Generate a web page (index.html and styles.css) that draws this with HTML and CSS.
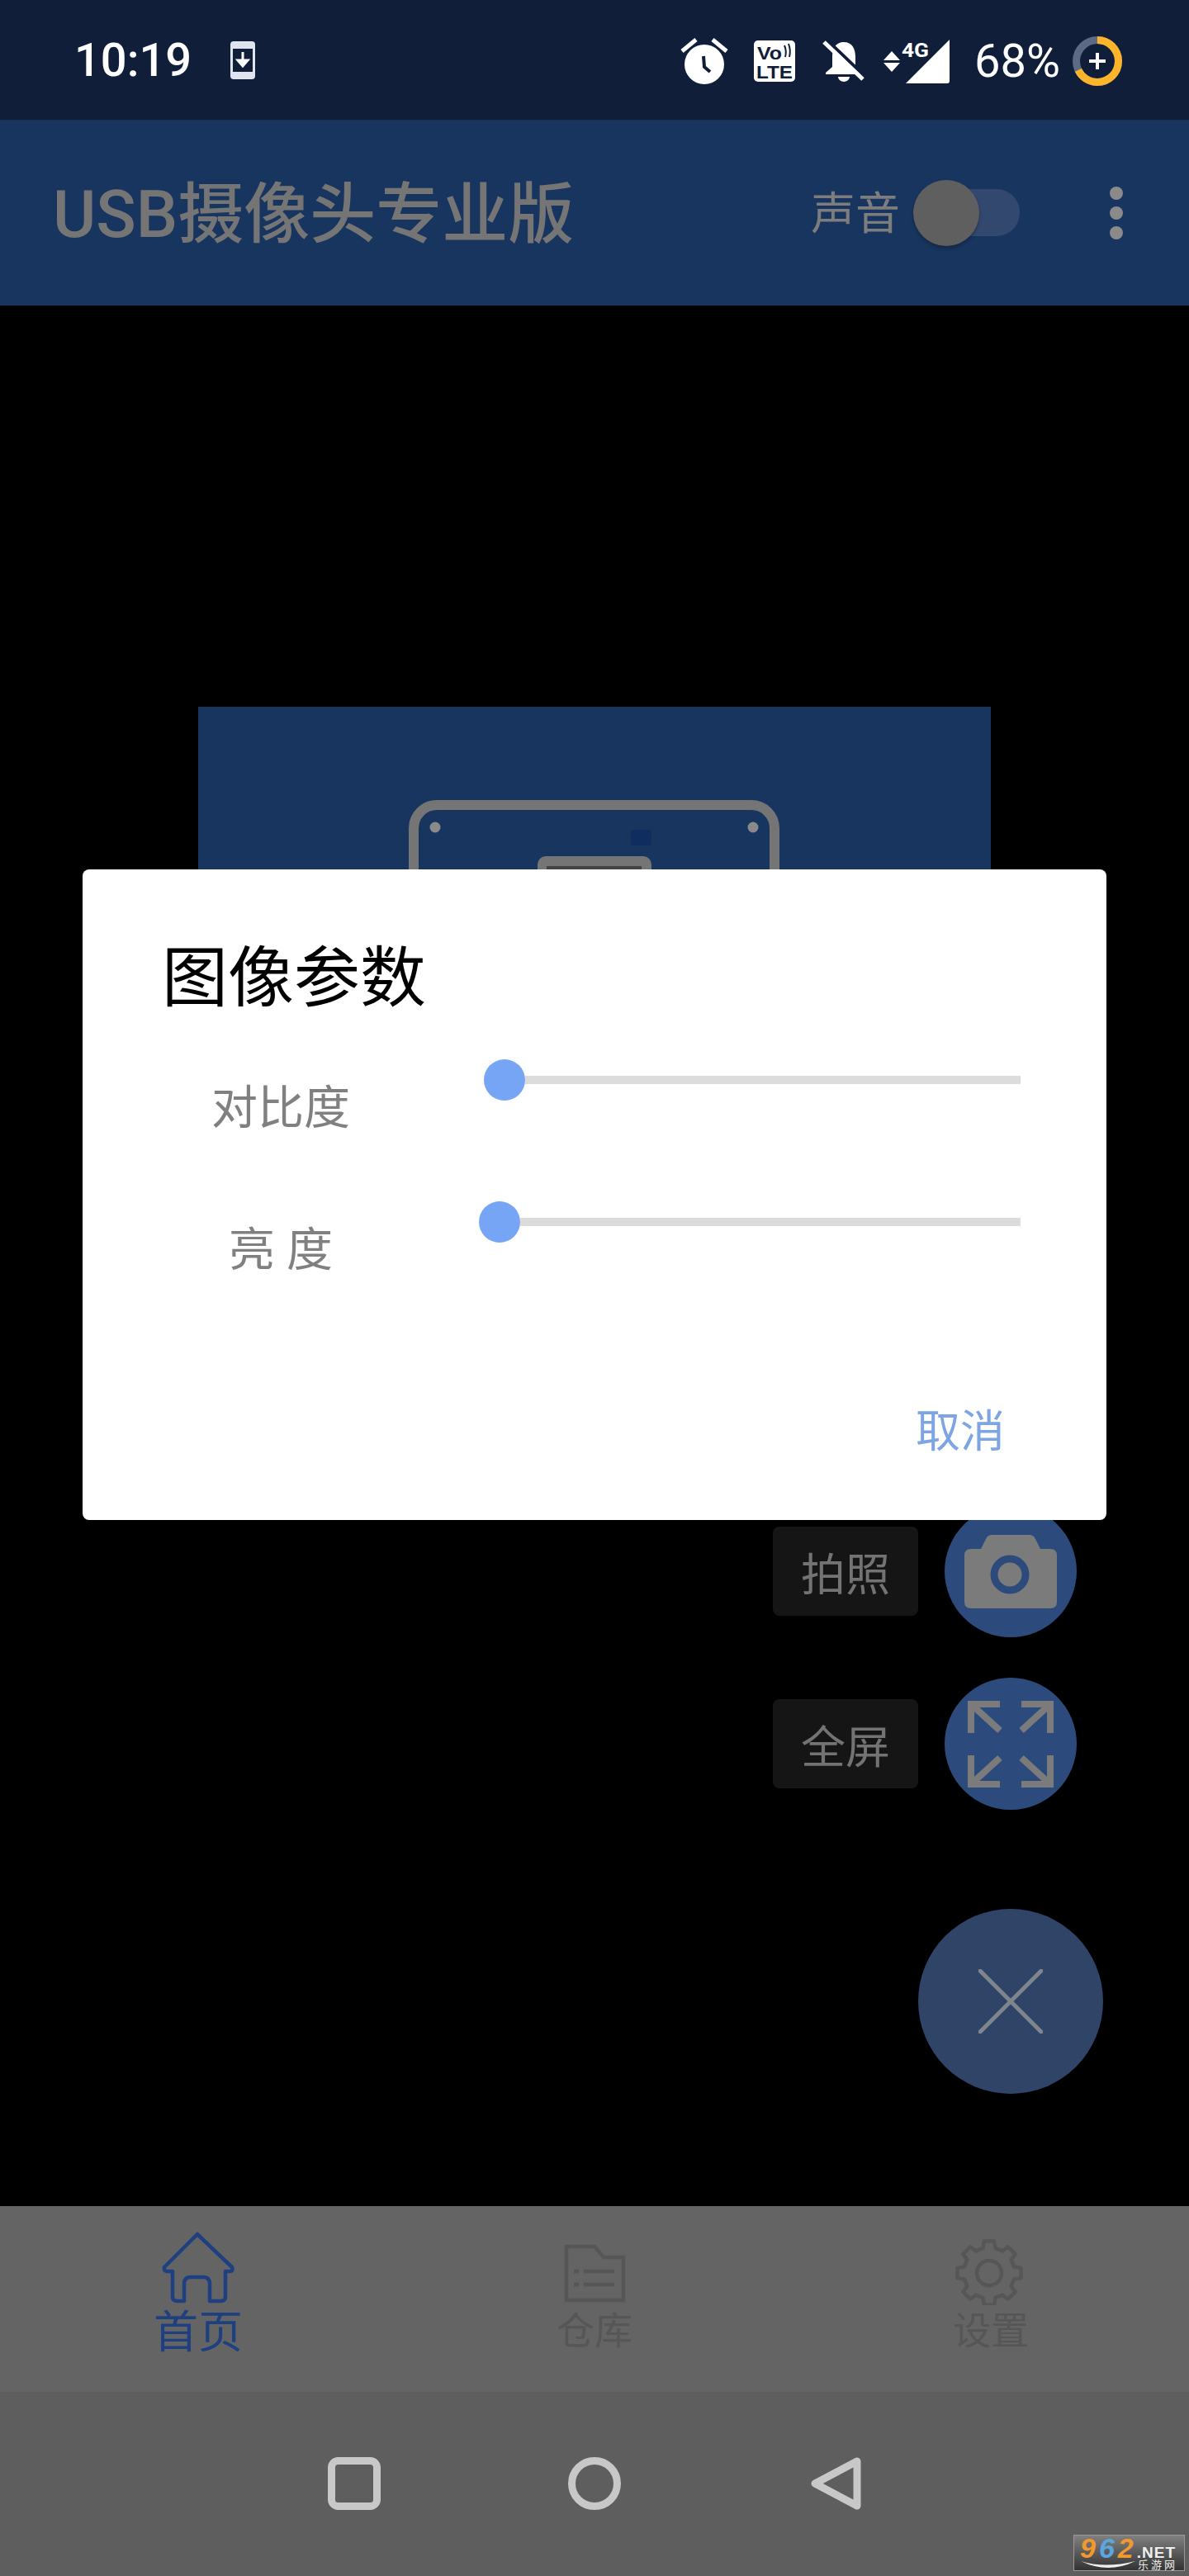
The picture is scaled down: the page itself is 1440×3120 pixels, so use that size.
FILE: index.html
```html
<!DOCTYPE html>
<html lang="zh">
<head>
<meta charset="utf-8">
<title>USB摄像头专业版</title>
<link rel="stylesheet" href="styles.css">
</head>
<body>
<div class="screen">
  <header class="status">
    <div class="status-left">
      <span class="time">10:19</span>
      <svg class="ico-dl" width="30" height="46" viewBox="0 0 30 46"><rect width="30" height="46" rx="4" fill="#dfe4ee"/><rect x="3" y="9" width="24" height="28" fill="#101e3a"/><path d="M15 13V28M9 23L15 30L21 23Z" stroke="#fff" stroke-width="3" fill="#fff"/></svg>
    </div>
    <div class="status-right">
      <svg width="58" height="56" viewBox="0 0 58 56"><circle cx="29" cy="32" r="24" fill="#fff"/><path d="M2 16L19 2M39 2L56 16" stroke="#fff" stroke-width="5"/><path d="M28 22L29 35L36 41" stroke="#101e3a" stroke-width="4" fill="none"/></svg>
      <svg class="g31" width="50" height="50" viewBox="0 0 50 50"><rect width="50" height="50" rx="5" fill="#fff"/><text x="4" y="23" class="vo" textLength="30" lengthAdjust="spacingAndGlyphs">Vo</text><path d="M37 6Q40 13 38 20M42 4Q45 12 43 20" stroke="#101e3a" stroke-width="2" fill="none"/><text x="3" y="46" class="lte" textLength="44" lengthAdjust="spacingAndGlyphs">LTE</text></svg>
      <svg class="g33" width="50" height="50" viewBox="0 0 50 50"><path d="M26 2C36 2 40 10 40 20V32L48 40V41H4V39L12 32V20C12 10 16 2 26 2Z" fill="#fff"/><path d="M19 44A7 6 0 0 0 33 44Z" fill="#fff"/><path d="M6 0L50 42" stroke="#101e3a" stroke-width="4"/><path d="M2 2L49 47" stroke="#fff" stroke-width="5"/></svg>
      <svg class="g24" width="80" height="54" viewBox="0 0 80 54"><path d="M80 1V51Q80 54 77 54H27Z" fill="#fff"/><path d="M10 15L20 26H0ZM10 40L0 29H20Z" fill="#fff"/><text x="22" y="22" class="fourg" textLength="33" lengthAdjust="spacingAndGlyphs">4G</text></svg>
      <span class="batt">68%</span>
      <svg class="ring" width="60" height="60" viewBox="0 0 60 60"><circle cx="30" cy="30" r="25.5" fill="none" stroke="#5c6a85" stroke-width="9"/><circle cx="30" cy="30" r="25.5" fill="none" stroke="#fdb32a" stroke-width="9" pathLength="100" stroke-dasharray="68 32" transform="rotate(-90 30 30)"/><path d="M30 20V40M20 30H40" stroke="#fff" stroke-width="4"/></svg>
    </div>
  </header>

  <div class="appbar">
    <h1 class="app-title">USB摄像头专业版</h1>
    <div class="app-actions">
      <span class="sound">声音</span>
      <div class="track"><span class="thumb"></span></div>
      <div class="dots"><i></i><i></i><i></i></div>
    </div>
  </div>

  <main class="main">
    <svg class="preview" width="960" height="720" viewBox="0 0 960 720">
      <rect width="960" height="720" fill="#18355f"/>
      <rect x="261" y="119" width="437" height="560" rx="28" fill="none" stroke="#757575" stroke-width="12"/>
      <circle cx="287" cy="146" r="6.5" fill="#8a8a8a"/>
      <circle cx="672" cy="146" r="6.5" fill="#8a8a8a"/>
      <rect x="524" y="149" width="25" height="19" rx="3" fill="#0f2d5f"/>
      <rect x="411" y="181" width="138" height="200" rx="10" fill="#757575"/>
      <rect x="422" y="193" width="115" height="100" fill="#444"/>
    </svg>

    <div class="fabs">
      <div class="fab-row">
        <span class="fab-label">拍照</span>
        <span class="fab">
          <svg width="112" height="89" viewBox="0 0 112 89"><path d="M8 17H20L26 5Q28 0 34 0H78Q84 0 86 5L92 17H104Q112 17 112 25V81Q112 89 104 89H8Q0 89 0 81V25Q0 17 8 17Z" fill="#7b7b7b"/><circle cx="55" cy="48" r="19" fill="none" stroke="#2d4a7c" stroke-width="9"/></svg>
        </span>
      </div>
      <div class="fab-row">
        <span class="fab-label">全屏</span>
        <span class="fab">
          <svg width="104" height="105" viewBox="0 0 104 105"><g fill="none" stroke="#7b7b7b" stroke-width="8"><path d="M4 39V4H39M4 4L39 36"/><path d="M65 4H100V39M100 4L65 36"/><path d="M4 66V101H39M4 101L39 69"/><path d="M65 101H100V66M100 101L65 69"/></g></svg>
        </span>
      </div>
      <button class="fab-main" type="button">
        <svg width="78" height="78" viewBox="0 0 78 78"><path d="M2 2L76 76M76 2L2 76" stroke="#7e868c" stroke-width="5" stroke-linecap="round"/></svg>
      </button>
    </div>
  </main>

  <nav class="tabs">
    <div class="tab tab-on">
      <svg width="90" height="90" viewBox="0 0 90 90"><path d="M44 4L4 44Q3 49 8 49H14V80Q14 85 20 85H28V64Q28 56 36 56H51Q59 56 59 64V85H72Q78 85 78 80V49H83Q88 49 86 44Z" fill="none" stroke="#1e3f80" stroke-width="4.5" stroke-linejoin="round"/></svg>
      <span>首页</span>
    </div>
    <div class="tab">
      <svg width="90" height="90" viewBox="0 0 90 90"><g fill="none" stroke="#565656" stroke-width="4.5"><path d="M11 19H45L56 32H80V84H11Z"/><path d="M20 49H26M32 49H69M20 65H26M32 65H69"/></g></svg>
      <span>仓库</span>
    </div>
    <div class="tab">
      <svg width="90" height="90" viewBox="0 0 90 90"><g transform="translate(43 51)" fill="none" stroke="#565656" stroke-width="4.5" stroke-linejoin="round"><polygon points="30.1,-7.5 38.5,-6.1 38.5,6.1 30.1,7.5 26.6,16 31.6,22.9 22.9,31.6 16,26.6 7.5,30.1 6.1,38.5 -6.1,38.5 -7.5,30.1 -16,26.6 -22.9,31.6 -31.6,22.9 -26.6,16 -30.1,7.5 -38.5,6.1 -38.5,-6.1 -30.1,-7.5 -26.6,-16 -31.6,-22.9 -22.9,-31.6 -16,-26.6 -7.5,-30.1 -6.1,-38.5 6.1,-38.5 7.5,-30.1 16,-26.6 22.9,-31.6 31.6,-22.9 26.6,-16"/><circle r="15"/></g></svg>
      <span>设置</span>
    </div>
  </nav>

  <div class="sysnav">
    <svg width="64" height="64" viewBox="0 0 64 64"><rect x="4.500" y="4.500" width="55" height="55" rx="8" fill="none" stroke="#c8c8c8" stroke-width="9"/></svg>
    <svg width="64" height="64" viewBox="0 0 64 64"><circle cx="32" cy="32" r="27.500" fill="none" stroke="#c8c8c8" stroke-width="9"/></svg>
    <svg width="64" height="64" viewBox="0 0 64 64"><path d="M59 5V59L8 32Z" fill="none" stroke="#c8c8c8" stroke-width="9" stroke-linejoin="round"/></svg>
  </div>

  <section class="dialog">
    <h2 class="dlg-title">图像参数</h2>
    <div class="dlg-row">
      <span class="dlg-label">对比度</span>
      <div class="slider slider-a"><span class="knob"></span><span class="rail"></span></div>
    </div>
    <div class="dlg-row">
      <span class="dlg-label">亮 度</span>
      <div class="slider"><span class="knob"></span><span class="rail"></span></div>
    </div>
    <div class="dlg-actions"><span class="dlg-btn">取消</span></div>
  </section>

  <div class="wm">
    <div class="wm-top"><span class="wm-962"><b class="o">9</b><b class="b">6</b><b class="o">2</b></span><span class="wm-net">.NET</span></div>
    <div class="wm-bot">
      <svg width="68" height="12" viewBox="0 0 68 12"><path d="M1 1Q30 10 67 1Q34 17 1 1Z" fill="#eee"/></svg>
      <span class="wm-cn">乐游网</span>
    </div>
  </div>
</div>
</body>
</html>
```
FILE: styles.css
```css
* { box-sizing: border-box; }
html, body { margin: 0; padding: 0; background: #000; }
body { font-family: Roboto, "Noto Sans CJK SC", sans-serif; }

.screen {
  position: relative;
  width: 1440px;
  height: 3120px;
  display: flex;
  flex-direction: column;
  overflow: hidden;
  background: #000;
}

/* status bar */
.status {
  flex: none;
  height: 145px;
  background: #101e3a;
  color: #fff;
  display: flex;
  align-items: center;
  justify-content: space-between;
  padding: 0 81px 0 90px;
}
.status-left, .status-right { display: flex; align-items: center; }
.status-right { padding-top: 2px; }
.status-right svg { overflow: visible; }
.time { font-size: 56px; font-weight: 500; line-height: 60px; }
.ico-dl { margin-left: 47px; }
.g31 { margin-left: 31px; }
.g33 { margin-left: 33px; }
.g24 { margin-left: 24px; }
.batt { margin-left: 30px; font-size: 56px; line-height: 60px; width: 103px; white-space: nowrap; }
.ring { margin-left: 16px; }
.vo { font: 700 22px "Liberation Sans", sans-serif; fill: #101e3a; }
.lte { font: 700 22px "Liberation Sans", sans-serif; fill: #101e3a; }
.fourg { font: 700 24px Roboto, sans-serif; fill: #fff; }

/* app bar */
.appbar {
  flex: none;
  height: 225px;
  background: #18355f;
  display: flex;
  align-items: center;
  justify-content: space-between;
  padding: 0 80px 0 64px;
}
.app-title {
  margin: 0;
  padding-top: 5px;
  font-size: 80px;
  line-height: 90px;
  font-weight: 500;
  color: #757575;
}
.app-actions { display: flex; align-items: center; }
.sound { padding-top: 5px; font-size: 54px; line-height: 60px; color: #7d7d7d; }
.track {
  width: 89px;
  height: 57px;
  margin-left: 56px;
  margin-right: 109px;
  border-radius: 28px;
  background: #33486f;
  display: flex;
  align-items: center;
}
.thumb {
  flex: none;
  width: 80px;
  height: 80px;
  margin-left: -40px;
  border-radius: 50%;
  background: #5f5f5f;
  box-shadow: 0 3px 4px rgba(0, 0, 0, .25);
}
.dots { display: flex; flex-direction: column; gap: 8px; }
.dots i { display: block; width: 16px; height: 16px; border-radius: 50%; background: #8a8a8a; }

/* main */
.main { position: relative; flex: 1; background: #000; }
.preview { display: block; margin: 486px 0 0 240px; }

.fabs {
  position: absolute;
  right: 104px;
  bottom: 136px;
  display: flex;
  flex-direction: column;
  align-items: flex-end;
}
.fab-row {
  display: flex;
  align-items: center;
  gap: 32px;
  padding-right: 32px;
  margin-bottom: 49px;
}
.fab-row + .fab-main { margin-top: 71px; }
.fab-label {
  width: 176px;
  height: 108px;
  border-radius: 8px;
  background: #151515;
  color: #737373;
  font-size: 54px;
  display: flex;
  align-items: center;
  justify-content: center;
}
.fab {
  width: 160px;
  height: 160px;
  border-radius: 50%;
  background: #2d4a7c;
  display: flex;
  align-items: center;
  justify-content: center;
}
.fab-main {
  width: 224px;
  height: 224px;
  padding: 0;
  border: 0;
  border-radius: 50%;
  background: #304468;
  display: flex;
  align-items: center;
  justify-content: center;
}

/* bottom tabs */
.tabs {
  flex: none;
  height: 225px;
  background: #646464;
  display: grid;
  grid-template-columns: repeat(3, 480px);
  padding-top: 30px;
}
.tab {
  display: flex;
  flex-direction: column;
  align-items: center;
  color: #565656;
  font-size: 46px;
  line-height: 50px;
}
.tab svg { display: block; flex: none; margin-bottom: 6px; }
.tab-on { color: #1e3f80; font-size: 54px; line-height: 56px; }

/* system nav */
.sysnav {
  flex: none;
  height: 223px;
  background: #5e5e5e;
  display: flex;
  justify-content: center;
  gap: 227px;
  padding-top: 79px;
}
.sysnav svg { display: block; }

/* dialog */
.dialog {
  position: absolute;
  left: 100px;
  top: 1053px;
  width: 1240px;
  height: 788px;
  background: #fff;
  border-radius: 8px;
  padding: 82px 104px 0 96px;
}
.dlg-title {
  margin: 0 0 48px;
  font-size: 80px;
  line-height: 100px;
  font-weight: 400;
  color: #000;
}
.dlg-row {
  display: grid;
  grid-template-columns: 288px 1fr;
  height: 172px;
}
.dlg-label {
  padding-top: 31px;
  text-align: center;
  font-size: 56px;
  line-height: 56px;
  color: #808080;
}
.slider { display: flex; align-items: center; height: 50px; margin-left: 96px; }
.slider-a { margin-left: 102px; }
.knob { flex: none; width: 50px; height: 50px; border-radius: 50%; background: #77a5f5; }
.rail { flex: 1; height: 10px; background: #dcdcdc; }
.dlg-actions { display: flex; justify-content: flex-end; padding: 78px 19px 0 0; }
.dlg-btn { font-size: 54px; line-height: 60px; color: #7ea5e3; }

/* watermark */
.wm {
  position: absolute;
  right: 5px;
  bottom: 6px;
  width: 135px;
  height: 44px;
  padding: 1px 0 0 7px;
  border: 1px solid #999;
  background: linear-gradient(#808080, #333);
}
.wm-top { display: flex; align-items: baseline; height: 28px; line-height: 28px; }
.wm-962 { font: italic 700 34px/28px "Liberation Sans", sans-serif; letter-spacing: 4px; }
.wm-962 b { font-weight: 700; }
.o { color: #f2992e; }
.b { color: #5aa7e0; }
.wm-net { font: 700 19px/28px "Liberation Sans", sans-serif; letter-spacing: 1px; color: #eee; white-space: nowrap; }
.wm-bot { display: flex; align-items: center; gap: 2px; height: 13px; }
.wm-bot svg { flex: none; }
.wm-cn { font-size: 13px; line-height: 13px; letter-spacing: 3px; color: #eee; white-space: nowrap; }
```
